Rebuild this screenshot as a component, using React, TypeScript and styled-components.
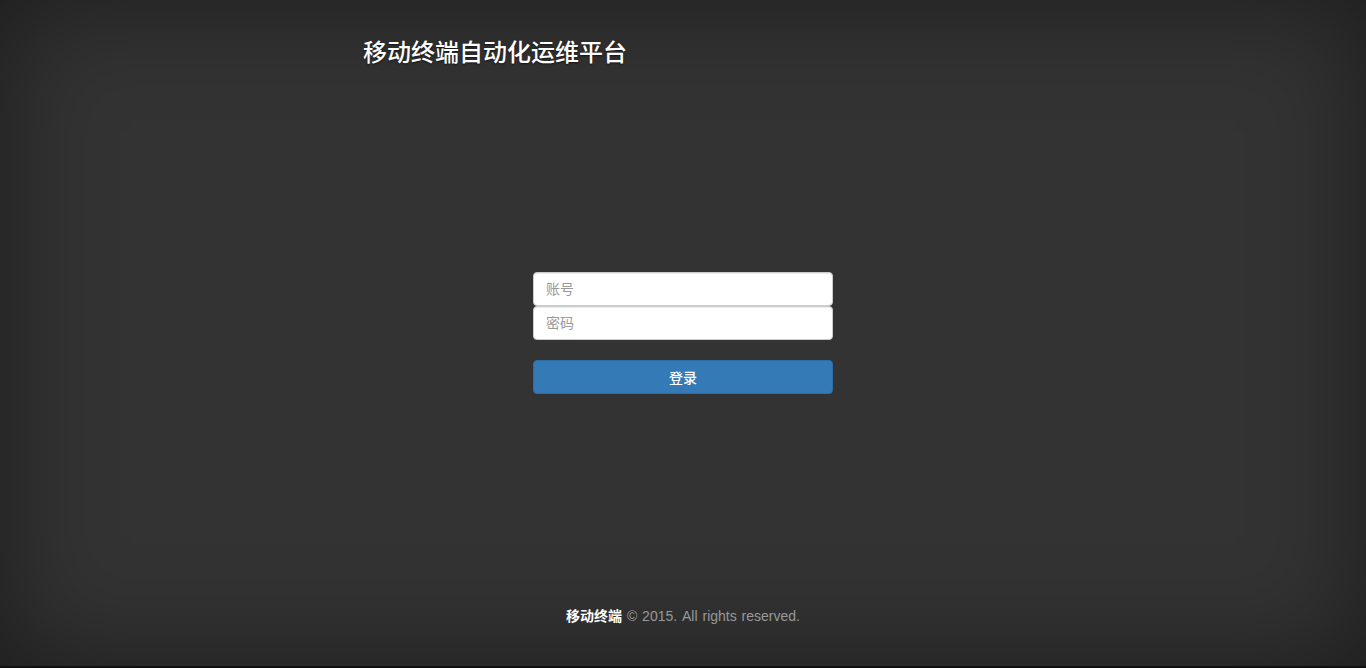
import React from "react";
import styled, { createGlobalStyle } from "styled-components";

const Global = createGlobalStyle`
  html { background: #111; }
  html, body { margin: 0; padding: 0; }
  body { font-family: "Liberation Sans", Arial, "Noto Sans CJK SC", sans-serif; }
  * { box-sizing: border-box; }
`;

const Page = styled.div`
  height: 666px;
  background: #333;
  box-shadow: inset 0 0 110px rgba(0, 0, 0, 0.45);
  display: flex;
  flex-direction: column;
`;

const Header = styled.header`
  padding: 38px 0 0 363px;
`;

const Title = styled.h1`
  margin: 0;
  font-family: "Noto Sans CJK SC", sans-serif;
  font-size: 24px;
  line-height: 26px;
  font-weight: 500;
  color: #fff;
  text-shadow: 0 1px 2px rgba(0, 0, 0, 0.6);
`;

const Form = styled.form`
  width: 300px;
  margin: 208px auto 0;
  display: flex;
  flex-direction: column;
`;

const Input = styled.input`
  height: 34px;
  width: 100%;
  padding: 6px 12px;
  font-size: 14px;
  font-family: "Liberation Sans", Arial, "Noto Sans CJK SC", sans-serif;
  color: #555;
  background: #fff;
  border: 1px solid #ccc;
  border-radius: 4px;
  box-shadow: inset 0 1px 1px rgba(0, 0, 0, 0.075);
  outline: none;
  &::placeholder { color: #999; }
`;

const Button = styled.button`
  margin-top: 20px;
  height: 34px;
  width: 100%;
  font-size: 14px;
  font-family: "Noto Sans CJK SC", sans-serif;
  font-weight: 500;
  color: #fff;
  background: #337ab7;
  border: 1px solid #2e6da4;
  border-radius: 4px;
  cursor: pointer;
`;

const Footer = styled.footer`
  margin-top: auto;
  padding-bottom: 40px;
  text-align: center;
  font-size: 14px;
  line-height: 20px;
  color: #999;
  word-spacing: 1px;
`;

const Brand = styled.strong`
  color: #fff;
  font-family: "Noto Sans CJK SC", sans-serif;
  font-weight: 700;
`;

export default function App() {
  return (
    <>
      <Global />
      <Page>
        <Header>
          <Title>移动终端自动化运维平台</Title>
        </Header>
        <Form onSubmit={(e) => e.preventDefault()}>
          <Input type="text" placeholder="账号" />
          <Input type="password" placeholder="密码" />
          <Button type="submit">登录</Button>
        </Form>
        <Footer>
          <Brand>移动终端</Brand> © 2015. All rights reserved.
        </Footer>
      </Page>
    </>
  );
}
